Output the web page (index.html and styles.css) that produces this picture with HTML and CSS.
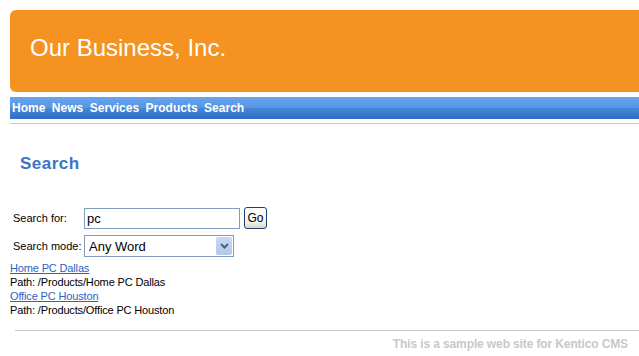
FILE: index.html
```html
<!DOCTYPE html>
<html lang="en">
<head>
    <meta charset="UTF-8">
    <meta name="viewport" content="width=device-width, initial-scale=1.0">
    <title>Our Business, Inc. - Search</title>
    <link rel="stylesheet" href="styles.css">
</head>
<body>

    <div class="header">
        <h1 class="site-title">Our Business, Inc.</h1>
    </div>

    <div class="menu">
        <a href="#">Home</a>
        <a href="#">News</a>
        <a href="#">Services</a>
        <a href="#">Products</a>
        <a href="#">Search</a>
    </div>
    <div class="divider"></div>

    <h2 class="page-title">Search</h2>

    <div class="search-form">
        <div class="form-row">
            <label class="form-label" for="searchText">Search for:</label>
            <input id="searchText" class="search-input" type="text" value="pc">
            <button class="go-btn">Go</button>
        </div>
        <div class="form-row">
            <label class="form-label" for="searchMode">Search mode:</label>
            <div class="select-wrap">
                <select id="searchMode" class="search-mode">
                    <option>Any Word</option>
                    <option>All Words</option>
                    <option>Exact Phrase</option>
                </select>
                <span class="select-arrow">
                    <svg width="9" height="6" viewBox="0 0 9 6"><path d="M1 1 L4.5 4.5 L8 1" fill="none" stroke="#4a5f86" stroke-width="2"/></svg>
                </span>
            </div>
        </div>
    </div>

    <div class="results">
        <a href="#">Home PC Dallas</a>
        <p>Path: /Products/Home PC Dallas</p>
        <a href="#">Office PC Houston</a>
        <p>Path: /Products/Office PC Houston</p>
    </div>

    <div class="footer-line"></div>
    <div class="footer">This is a sample web site for Kentico CMS</div>

</body>
</html>
```

FILE: styles.css
```css
body {
    margin: 0;
    padding: 10px 0 0 10px;
    font-family: "Liberation Sans", Arial, sans-serif;
    font-size: 11px;
    color: #000;
    background: #fff;
}

.header {
    height: 82px;
    box-sizing: border-box;
    padding: 26px 20px 0;
    background: #f59322;
    border-radius: 6px 0 0 6px;
}

.site-title {
    margin: 0;
    font-size: 24px;
    line-height: 24px;
    font-weight: normal;
    color: #fff;
}

.menu {
    display: flex;
    gap: 6.5px;
    margin-top: 5px;
    height: 22px;
    padding-left: 2px;
    background: linear-gradient(#67a4ee, #5896e4 48%, #4787d8 52%, #2d6ec6);
}

.menu a {
    color: #fff;
    font-size: 12px;
    font-weight: bold;
    line-height: 22px;
    text-decoration: none;
}

.divider {
    margin-top: 4px;
    height: 1px;
    background: #c8c8c8;
}

.page-title {
    margin: 30px 0 0;
    padding-left: 10px;
    font-size: 17px;
    line-height: 20px;
    letter-spacing: 0.5px;
    color: #3b74c3;
}

.search-form {
    margin-top: 33px;
}

.form-row {
    display: flex;
    align-items: center;
    height: 22px;
}

.form-row + .form-row {
    margin-top: 6px;
}

.form-label {
    width: 71px;
    padding-left: 3px;
    line-height: 13px;
}

.search-input {
    width: 156px;
    height: 21px;
    box-sizing: border-box;
    margin: 0;
    padding: 0 2px;
    border: 1px solid #7f9db9;
    font-family: "Liberation Sans", Arial, sans-serif;
    font-size: 13px;
    outline: none;
}

.go-btn {
    width: 23px;
    height: 22px;
    margin: 0 0 0 4px;
    padding: 0;
    border: 1px solid #1c3f72;
    border-radius: 3px;
    background: linear-gradient(#ffffff, #f2f1ec 70%, #d9d4c8);
    font-family: "Liberation Sans", Arial, sans-serif;
    font-size: 12px;
    color: #000;
}

.select-wrap {
    position: relative;
    width: 150px;
    height: 22px;
}

.search-mode {
    width: 100%;
    height: 22px;
    margin: 0;
    padding: 0 0 0 4px;
    border: 1px solid #7f9db9;
    border-radius: 0;
    background: #fff;
    appearance: none;
    -webkit-appearance: none;
    font-family: "Liberation Sans", Arial, sans-serif;
    font-size: 13px;
    color: #000;
    outline: none;
}

.select-arrow {
    position: absolute;
    top: 2px;
    right: 2px;
    width: 16px;
    height: 18px;
    display: flex;
    align-items: center;
    justify-content: center;
    border-radius: 2px;
    background: linear-gradient(#cad8f3, #b3c7eb);
    pointer-events: none;
}

.results {
    margin-top: 4px;
    line-height: 14px;
    letter-spacing: -0.15px;
}

.results a {
    display: block;
    color: #2a63c4;
}

.results p {
    margin: 0;
}

.footer-line {
    margin: 13px 0 0 5px;
    height: 1px;
    background: #c8c8c8;
}

.footer {
    padding: 6px 11px 0 0;
    text-align: right;
    font-size: 12px;
    font-weight: bold;
    line-height: 14px;
    letter-spacing: -0.12px;
    color: #c8c8c8;
}
```
